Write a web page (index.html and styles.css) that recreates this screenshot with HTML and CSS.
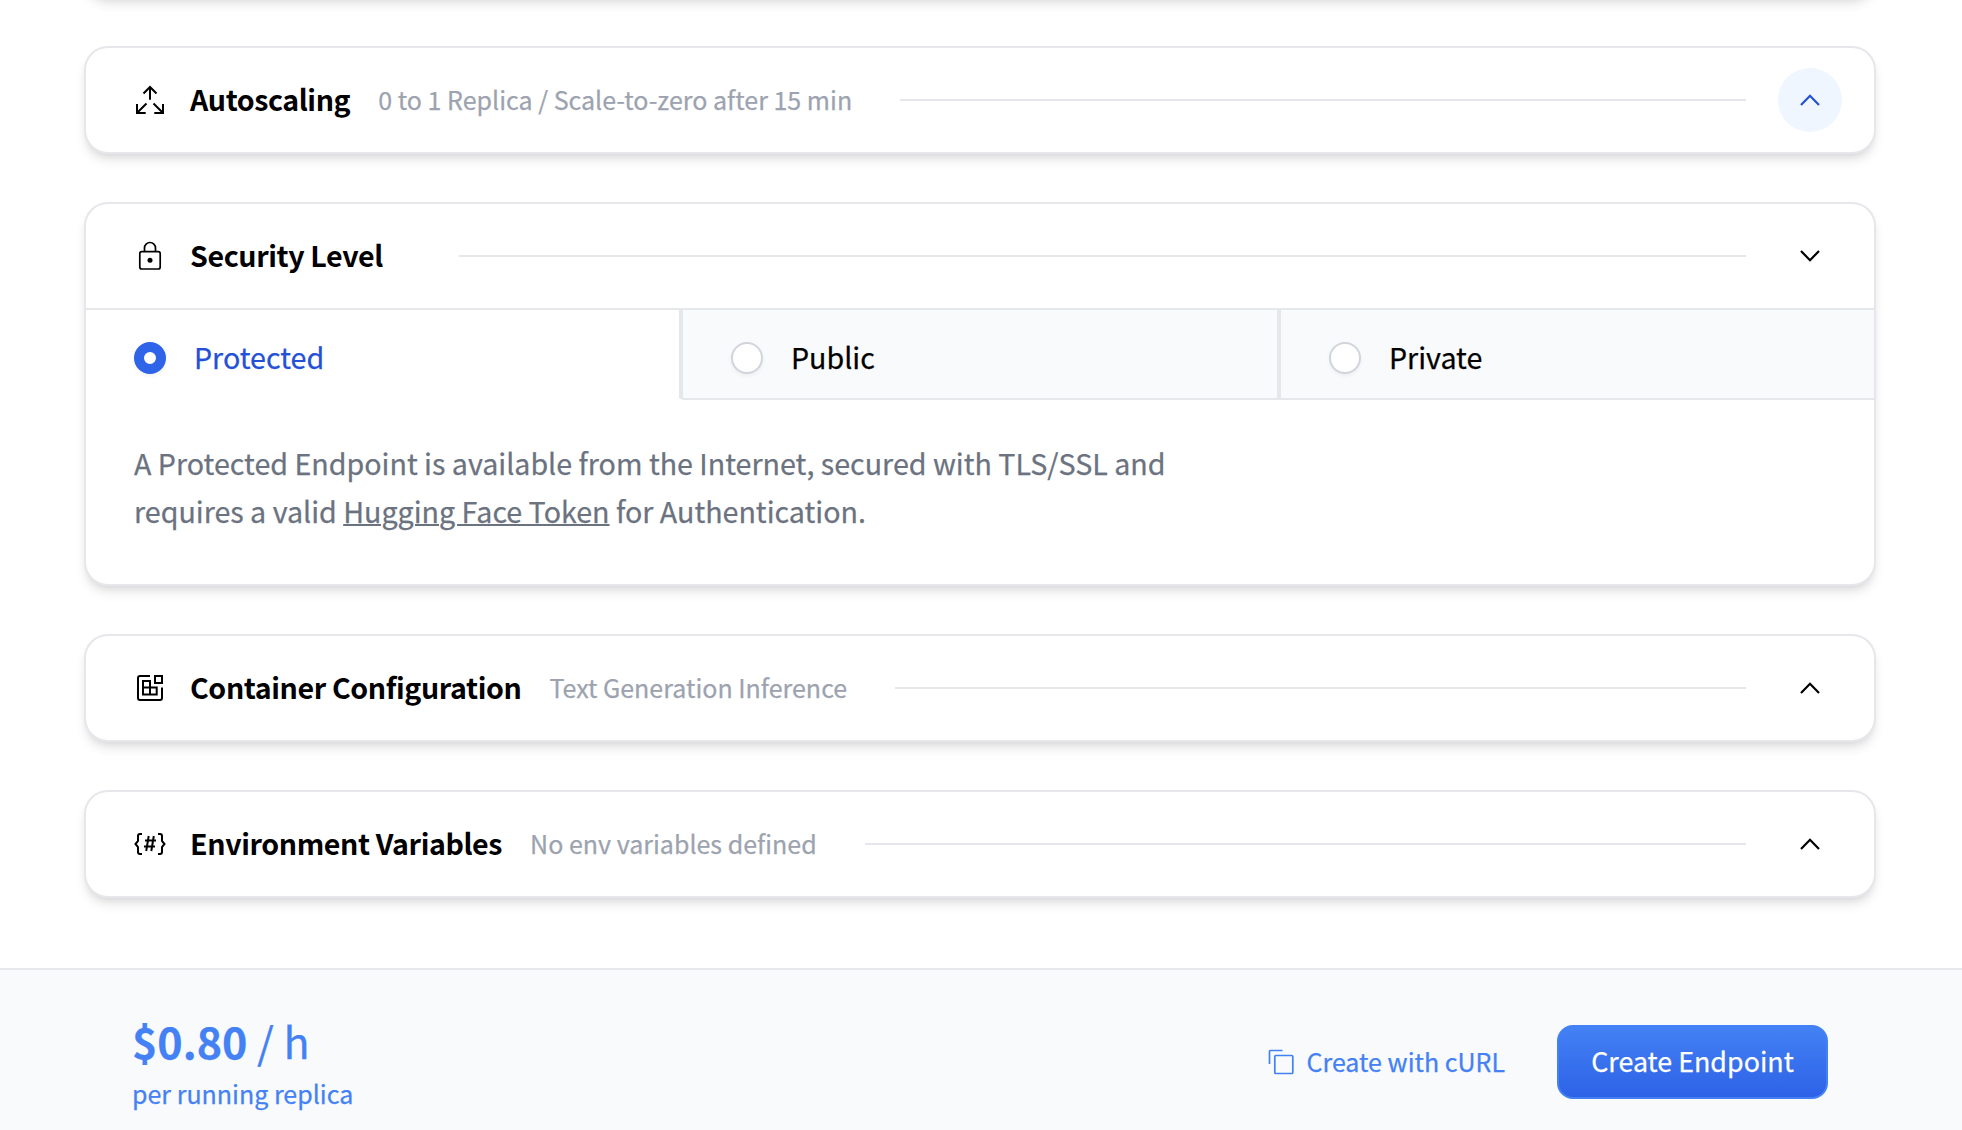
FILE: index.html
```html
<!DOCTYPE html>
<html lang="en">
<head>
<meta charset="utf-8">
<title>Create Endpoint</title>
<link rel="stylesheet" href="styles.css">
</head>
<body>
<main class="sections">
  <section class="card card-previous"></section>

  <section class="card">
    <header class="card-header">
      <svg class="icon" viewBox="0 0 32 32" fill="none" stroke="currentColor" stroke-width="2"><path d="M16 15.700V3M9.500 9.500L16 3L22.500 9.500M12.500 19.500L3.200 28.800M3 20v9h8.700M19.500 19.500l9.300 9.300M29 20v9h-8.700"/></svg>
      <h2 class="title">Autoscaling</h2>
      <span class="summary">0 to 1 Replica / Scale-to-zero after 15 min</span>
      <span class="rule"></span>
      <button class="toggle toggle-active"><svg class="chevron" viewBox="0 0 20 12"><path d="M1 11L10 1.800L19 11"/></svg></button>
    </header>
  </section>

  <section class="card">
    <header class="card-header">
      <svg class="icon" viewBox="0 0 32 32" fill="none" stroke="currentColor" stroke-width="1.700"><rect x="5.800" y="11.600" width="20.400" height="17.400" rx="2"/><path d="M10.500 11.600V8a5.500 5.500 0 0 1 11 0v3.600"/><circle cx="16" cy="20.300" r="2.500" fill="currentColor" stroke="none"/></svg>
      <h2 class="title">Security Level</h2>
      <span class="summary"></span>
      <span class="rule"></span>
      <button class="toggle"><svg class="chevron" viewBox="0 0 20 12"><path d="M1 1L10 10.200L19 1"/></svg></button>
    </header>
    <div class="tabs">
      <label class="tab tab-selected"><span class="radio radio-on"></span><span class="tab-text">Protected</span></label>
      <label class="tab tab-mid"><span class="radio"></span><span class="tab-text">Public</span></label>
      <label class="tab"><span class="radio"></span><span class="tab-text">Private</span></label>
    </div>
    <p class="description">A Protected Endpoint is available from the Internet, secured with TLS/SSL and<br>requires a valid <a class="link">Hugging Face Token</a> for Authentication.</p>
  </section>

  <section class="card">
    <header class="card-header">
      <svg class="icon" viewBox="0 0 32 32" fill="none" stroke="currentColor" stroke-width="2"><path d="M16 4H6Q4 4 4 6V26Q4 28 6 28H26Q28 28 28 26V15.500M21 4h7v7h-7zM9 9h7v6.500h6.700v7H9zM9 15.500h7v7"/></svg>
      <h2 class="title">Container Configuration</h2>
      <span class="summary">Text Generation Inference</span>
      <span class="rule"></span>
      <button class="toggle"><svg class="chevron" viewBox="0 0 20 12"><path d="M1 11L10 1.800L19 11"/></svg></button>
    </header>
  </section>

  <section class="card">
    <header class="card-header">
      <svg class="icon" viewBox="0 0 32 32" fill="none" stroke="currentColor" stroke-width="2"><path d="M8 6H6Q4 6 4 8V13L1.500 16L4 19V24Q4 26 6 26H8M24 6h2Q28 6 28 8V13L30.500 16L28 19V24Q28 26 26 26H24M14.700 8L12.200 23M19.800 8L17.300 23M11 12.500H22M10 18.500H21"/></svg>
      <h2 class="title">Environment Variables</h2>
      <span class="summary">No env variables defined</span>
      <span class="rule"></span>
      <button class="toggle"><svg class="chevron" viewBox="0 0 20 12"><path d="M1 11L10 1.800L19 11"/></svg></button>
    </header>
  </section>
</main>

<footer class="footer">
  <div class="price">
    <div class="amount"><strong>$0.80</strong> / h</div>
    <div class="per">per running replica</div>
  </div>
  <div class="actions">
    <a class="curl"><svg class="copy" viewBox="0 0 26 26" fill="none" stroke="currentColor" stroke-width="1.700"><rect x="6.800" y="6.500" width="18" height="18" rx="1"/><path d="M1.500 15V2.500Q1.500 1.500 2.500 1.500H14.500"/></svg><span>Create with cURL</span></a>
    <button class="create">Create Endpoint</button>
  </div>
</footer>
</body>
</html>
```

FILE: styles.css
```css
* { box-sizing: border-box; }
body {
  margin: 0;
  height: 1130px;
  overflow: hidden;
  display: flex;
  flex-direction: column;
  background: #fff;
  color: #000;
  font-family: "Noto Sans CJK SC", "Noto Sans", sans-serif;
  -webkit-text-stroke: 0.25px currentColor;
}
h2, p { margin: 0; }
button { font: inherit; padding: 0; border: 0; background: none; }
.sections {
  height: 968px;
  flex: none;
  padding: 0 86px 0 84px;
  display: flex;
  flex-direction: column;
  gap: 48px;
}
.card {
  flex: none;
  border: 2px solid #e5e7eb;
  border-radius: 24px;
  background: #fff;
  box-shadow: 0 8px 12px -2px rgba(0, 0, 0, .1), 0 4px 8px -4px rgba(0, 0, 0, .1);
}
.card-previous { height: 108px; margin-top: -110px; }
.card-header {
  height: 104px;
  padding: 0 32px 0 48px;
  display: flex;
  align-items: center;
}
.icon { width: 32px; height: 32px; flex: none; margin-right: 24px; }
.title {
  padding-bottom: 2px;
  font-size: 28.600px;
  line-height: 48px;
  font-weight: 700;
  letter-spacing: -0.390px;
  white-space: nowrap;
  -webkit-text-stroke: 0;
}
.summary {
  margin: 0 48px 0 28px;
  padding-bottom: 2px;
  color: #9ca3af;
  font-size: 25.030px;
  line-height: 40px;
  white-space: nowrap;
}
.rule { flex: 1; height: 2px; background: #e5e7eb; margin-right: 32px; }
.toggle {
  width: 64px;
  height: 64px;
  border-radius: 50%;
  display: flex;
  align-items: center;
  justify-content: center;
  color: #000;
}
.toggle-active { background: #eff6ff; color: #2450d6; }
.chevron { width: 20px; height: 12px; fill: none; stroke: currentColor; stroke-width: 2.200; }
.tabs { display: grid; grid-template-columns: 597px 598px 1fr; height: 92px; border-top: 2px solid #e5e7eb; }
.tab {
  display: flex;
  align-items: center;
  padding: 8px 0 0 48px;
  gap: 28px;
  border-bottom: 2px solid #e5e7eb;
  background: #f9fafc;
  font-size: 28.630px;
}
.tab-selected { border-right: 4px solid #e5e7eb; border-bottom-color: #fff; background: #fff; color: #2450d6; }
.tab-mid { border-right: 4px solid #e5e7eb; }
.radio {
  width: 32px;
  height: 32px;
  border: 2px solid #d1d5db;
  border-radius: 50%;
  background: #fff;
  box-shadow: 0 2px 4px rgba(0, 0, 0, .05);
}
.radio-on { border: 10px solid #2f64e9; }
.tab-text { line-height: 48px; padding-bottom: 2px; }
.description {
  height: 184px;
  padding: 39px 48px;
  color: #6b7280;
  font-size: 28.630px;
  line-height: 48px;
  white-space: nowrap;
}
.link { text-decoration: underline; text-decoration-thickness: 2px; }
.footer {
  flex: 1;
  border-top: 2px solid #e5e7eb;
  background: #f9fafc;
  display: flex;
  justify-content: space-between;
  padding: 37px 134px 0 132px;
  color: #4381f4;
}
.amount { font-size: 43px; line-height: 66px; }
.per { font-size: 25.030px; line-height: 40px; }
.actions { display: flex; align-items: center; height: 74px; margin-top: 18px; gap: 52px; }
.curl { display: flex; align-items: center; gap: 13px; font-size: 25.030px; }
.curl span, .create { line-height: 40px; }
.curl span { padding-bottom: 2px; }
.copy { width: 26px; height: 26px; }
.create {
  width: 271px;
  height: 74px;
  padding-bottom: 3px;
  border: 2px solid #4381f4;
  border-radius: 16px;
  background: linear-gradient(#4381f4, #2d62e7);
  color: #fff;
  font-size: 26.850px;
}
```
